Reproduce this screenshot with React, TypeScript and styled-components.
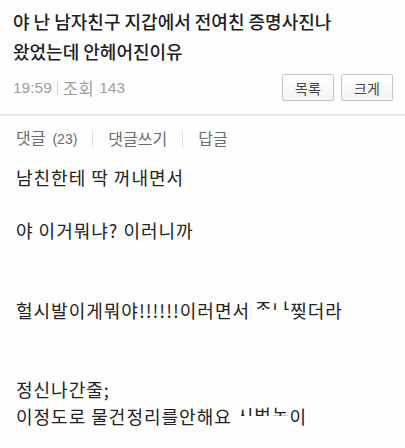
import React from "react";
import styled, { createGlobalStyle } from "styled-components";

const GlobalStyle = createGlobalStyle`
  html, body {
    margin: 0;
    padding: 0;
    background: #fff;
  }
  body {
    font-family: "Noto Sans CJK KR", "Noto Sans", sans-serif;
    color: #222;
  }
`;

const Page = styled.div`
  width: 405px;
  height: 448px;
  overflow: hidden;
  background: #fdfdfd;
`;

const Header = styled.div`
  padding: 6px 12px 0 13px;
  border-bottom: 2px solid #e8e8e8;
`;

const Title = styled.h1`
  margin: 0;
  font-size: 18px;
  line-height: 30px;
  font-weight: 500;
  color: #1e1e1e;
`;

const MetaRow = styled.div`
  display: flex;
  align-items: center;
  justify-content: space-between;
  padding: 8px 0 13px;
`;

const Meta = styled.div`
  font-family: "Liberation Sans", "Noto Sans CJK KR", sans-serif;
  font-size: 15.5px;
  color: #a0a0a0;
  display: flex;
  align-items: center;
  gap: 5px;
`;

const MetaLabel = styled.span`
  font-size: 16.5px;
  letter-spacing: 0.5px;
`;

const Bar = styled.span`
  width: 1px;
  height: 14px;
  background: #d0d0d0;
`;

const Buttons = styled.div`
  display: flex;
  gap: 7px;
`;

const Button = styled.button`
  width: 52px;
  height: 27px;
  border: 1px solid #c8c8c8;
  border-radius: 2px;
  background: linear-gradient(#ffffff, #f3f3f3);
  font-family: "Noto Sans CJK KR", sans-serif;
  font-size: 14px;
  color: #444;
  padding: 0;
`;

const Tabs = styled.div`
  display: flex;
  align-items: center;
  padding: 10px 16px 0;
  font-size: 16px;
  line-height: 23px;
  color: #6a6a6a;
  gap: 15px;
`;

const Count = styled.span`
  font-family: "Liberation Sans", sans-serif;
  font-size: 14px;
  margin-left: 7px;
`;

const TabBar = styled.span`
  width: 1px;
  height: 16px;
  background: #dcdcdc;
`;

const Body = styled.div`
  padding: 13px 16px 0;
  font-size: 18px;
  letter-spacing: 1px;
  line-height: 26.5px;
  color: #222;
`;

const Line = styled.div`
  height: 26.5px;
  white-space: nowrap;
`;

const Censored = styled.span`
  display: inline-block;
  height: 9px;
  overflow: hidden;
  vertical-align: 8px;
`;

const CensoredInner = styled.span`
  display: block;
  line-height: 26.5px;
  margin-top: -5px;
`;

export default function App() {
  return (
    <Page>
      <GlobalStyle />
      <Header>
        <Title>
          야 난 남자친구 지갑에서 전여친 증명사진나
          <br />
          왔었는데 안헤어진이유
        </Title>
        <MetaRow>
          <Meta>
            19:59 <Bar /> <MetaLabel>조회</MetaLabel> 143
          </Meta>
          <Buttons>
            <Button>목록</Button>
            <Button>크게</Button>
          </Buttons>
        </MetaRow>
      </Header>
      <Tabs>
        <span>
          댓글<Count>(23)</Count>
        </span>
        <TabBar />
        <span>댓글쓰기</span>
        <TabBar />
        <span>답글</span>
      </Tabs>
      <Body>
        <Line>남친한테 딱 꺼내면서</Line>
        <Line />
        <Line>야 이거뭐냐? 이러니까</Line>
        <Line />
        <Line />
        <Line>
          헐시발이게뭐야!!!!!!이러면서{" "}
          <Censored>
            <CensoredInner>존나</CensoredInner>
          </Censored>
          찢더라
        </Line>
        <Line />
        <Line />
        <Line>정신나간줄;</Line>
        <Line>
          이정도로 물건정리를안해요{" "}
          <Censored>
            <CensoredInner>시벌놈</CensoredInner>
          </Censored>
          이
        </Line>
      </Body>
    </Page>
  );
}
